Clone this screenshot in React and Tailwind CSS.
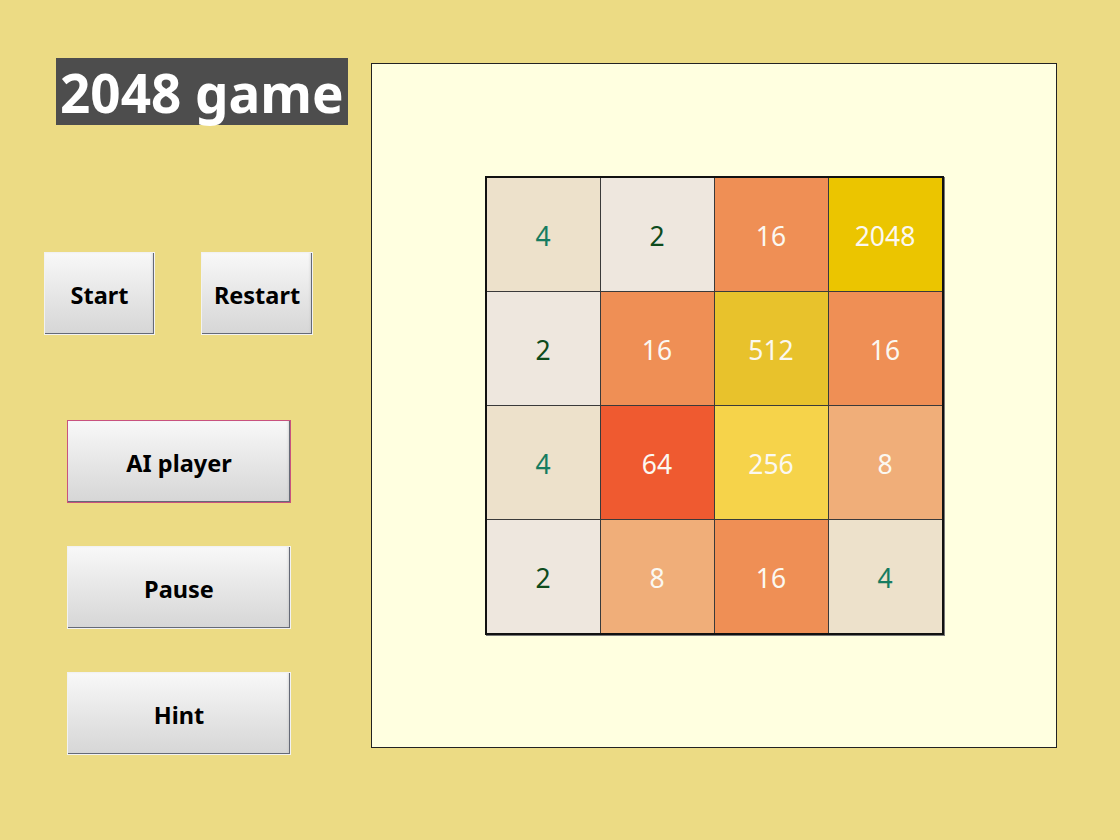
import React from "react";

const tiles = [
  [4, 2, 16, 2048],
  [2, 16, 512, 16],
  [4, 64, 256, 8],
  [2, 8, 16, 4],
];

const tileStyle = {
  2: "bg-[#eee7de] text-[#0e4b1c]",
  4: "bg-[#ede1cb] text-[#167c60]",
  8: "bg-[#f0ae79] text-[#fbf8f1]",
  16: "bg-[#ef8f55] text-[#fbf8f1]",
  64: "bg-[#ef5a30] text-[#fbf8f1]",
  256: "bg-[#f6d34a] text-[#fbf8f1]",
  512: "bg-[#e8c22c] text-[#fbf8f1]",
  2048: "bg-[#ebc500] text-[#fbf8f1]",
};

function Btn({ children, className = "", focus = false }) {
  return (
    <button
      className={
        "flex items-center justify-center pt-[4px] border bg-gradient-to-b from-[#f8f8f8] to-[#d6d6d6] shadow-[inset_-1px_-1px_0_#656a77,inset_-3px_0_3px_-2px_#bdbdbd] text-[23.5px] font-bold text-black " +
        (focus ? "border-[#c8527e] " : "border-[#f2f2f2] ") +
        className
      }
      style={{ fontFamily: '"Noto Sans", sans-serif' }}
    >
      {children}
    </button>
  );
}

export default function App() {
  return (
    <div
      className="w-[1120px] h-[840px] bg-[#ecdb84] flex"
      style={{ fontFamily: '"Noto Sans", sans-serif' }}
    >
      <div className="w-[371px] flex flex-col pt-[58px]">
        <div className="ml-[56px] self-start bg-[#4d4d4d] text-white font-bold text-[53px] leading-[64px] pt-[3px] px-[4px]">
          2048 game
        </div>
        <div className="flex mt-[127px] ml-[44px] gap-[46px]">
          <Btn className="w-[111px] h-[83px]">Start</Btn>
          <Btn className="w-[112px] h-[83px]">Restart</Btn>
        </div>
        <div className="flex flex-col ml-[67px] mt-[85px] gap-[43px]">
          <Btn focus className="w-[224px] h-[83px]">AI player</Btn>
          <Btn className="w-[224px] h-[83px]">Pause</Btn>
          <Btn className="w-[224px] h-[83px]">Hint</Btn>
        </div>
      </div>
      <div className="mt-[63px] w-[686px] h-[685px] bg-[#ffffe0] border border-[#222] flex items-center justify-center">
        <div className="grid grid-cols-[repeat(4,113px)] grid-rows-[repeat(4,113px)] gap-px bg-[#3a3a3a] border-2 border-[#111] shadow-[1px_1px_0_#777]">
          {tiles.flat().map((v, i) => (
            <div
              key={i}
              className={
                "flex items-center justify-center pt-[4px] text-[26.5px] " + tileStyle[v]
              }
            >
              {v}
            </div>
          ))}
        </div>
      </div>
    </div>
  );
}
